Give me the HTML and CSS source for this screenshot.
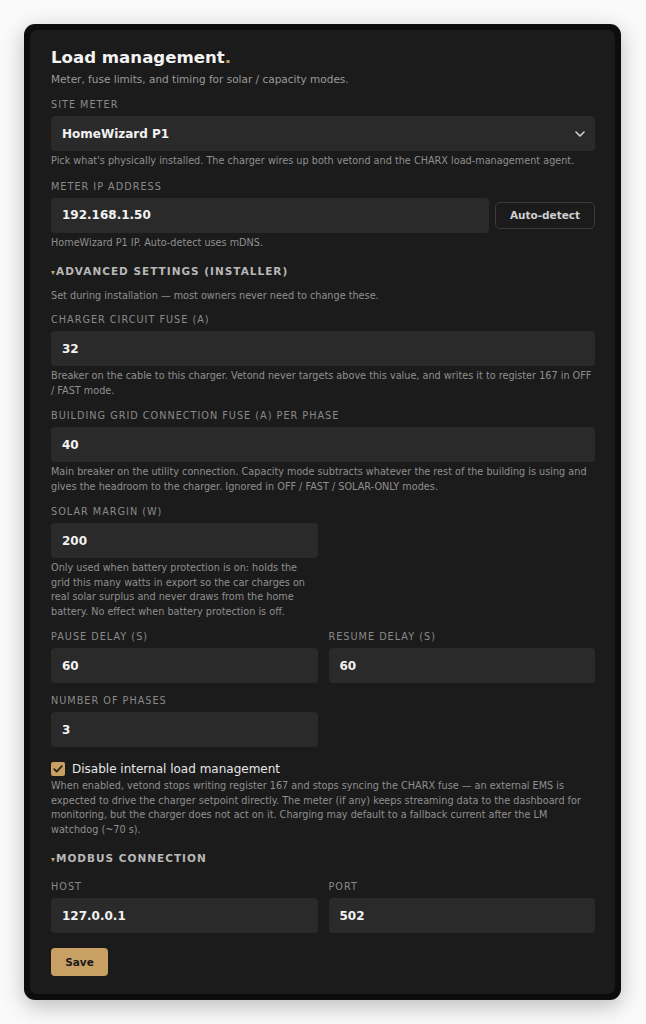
FILE: index.html
```html
<!DOCTYPE html>
<html lang="en">
<head>
<meta charset="utf-8">
<title>Load management</title>
<link rel="stylesheet" href="styles.css">
</head>
<body>
<div class="frame">
  <section class="card">
    <h1 class="title">Load management<span class="dot">.</span></h1>
    <p class="subtitle">Meter, fuse limits, and timing for solar / capacity modes.</p>

    <div class="field">
      <div class="label">Site meter</div>
      <div class="input select">
        <span>HomeWizard P1</span>
        <svg class="chev" width="10" height="6" viewBox="0 0 10 6"><path d="M1 1l4 4 4-4" fill="none" stroke="#d0d0d0" stroke-width="1.6" stroke-linecap="round" stroke-linejoin="round"/></svg>
      </div>
      <p class="hint">Pick what's physically installed. The charger wires up both vetond and the CHARX load-management agent.</p>
    </div>

    <div class="field">
      <div class="label">Meter IP address</div>
      <div class="row">
        <div class="input grow">192.168.1.50</div>
        <button class="btn-outline">Auto-detect</button>
      </div>
      <p class="hint">HomeWizard P1 IP. Auto-detect uses mDNS.</p>
    </div>

    <div class="toggle"><span class="tri"></span>Advanced settings (installer)</div>
    <p class="desc">Set during installation — most owners never need to change these.</p>

    <div class="field">
      <div class="label">Charger circuit fuse (A)</div>
      <div class="input">32</div>
      <p class="hint">Breaker on the cable to this charger. Vetond never targets above this value, and writes it to register 167 in OFF / FAST mode.</p>
    </div>

    <div class="field">
      <div class="label">Building grid connection fuse (A) per phase</div>
      <div class="input">40</div>
      <p class="hint">Main breaker on the utility connection. Capacity mode subtracts whatever the rest of the building is using and gives the headroom to the charger. Ignored in OFF / FAST / SOLAR-ONLY modes.</p>
    </div>

    <div class="grid2">
      <div class="field">
        <div class="label">Solar margin (W)</div>
        <div class="input">200</div>
        <p class="hint">Only used when battery protection is on: holds the grid this many watts in export so the car charges on real solar surplus and never draws from the home battery. No effect when battery protection is off.</p>
      </div>
    </div>

    <div class="grid2">
      <div class="field">
        <div class="label">Pause delay (s)</div>
        <div class="input">60</div>
      </div>
      <div class="field">
        <div class="label">Resume delay (s)</div>
        <div class="input">60</div>
      </div>
    </div>

    <div class="grid2">
      <div class="field">
        <div class="label">Number of phases</div>
        <div class="input">3</div>
      </div>
    </div>

    <label class="check">
      <span class="box"><svg width="10" height="8" viewBox="0 0 10 8"><path d="M1.2 4.2l2.5 2.4L8.8 1.2" fill="none" stroke="#2a2117" stroke-width="1.7" stroke-linecap="round" stroke-linejoin="round"/></svg></span>
      <span>Disable internal load management</span>
    </label>
    <p class="hint check-hint">When enabled, vetond stops writing register 167 and stops syncing the CHARX fuse — an external EMS is expected to drive the charger setpoint directly. The meter (if any) keeps streaming data to the dashboard for monitoring, but the charger does not act on it. Charging may default to a fallback current after the LM watchdog (~70 s).</p>

    <div class="toggle modbus"><span class="tri"></span>Modbus connection</div>

    <div class="grid2 hostrow">
      <div class="field">
        <div class="label">Host</div>
        <div class="input">127.0.0.1</div>
      </div>
      <div class="field">
        <div class="label">Port</div>
        <div class="input">502</div>
      </div>
    </div>

    <button class="btn-save">Save</button>
  </section>
</div>
</body>
</html>
```

FILE: styles.css
```css
* { box-sizing: border-box; }
html, body { margin: 0; padding: 0; }
body {
  background: #fafafa;
  font-family: "DejaVu Sans", "Liberation Sans", sans-serif;
  padding: 24px 25px 25px 24px;
}
.frame {
  background: #0c0c0c;
  border-radius: 11px;
  padding: 6px;
  box-shadow: 0 6px 22px rgba(0, 0, 0, 0.26);
}
.card {
  background: #1b1b1b;
  border-radius: 7px;
  padding: 18px 20px 18px 21px;
}
.title {
  margin: 0;
  font-size: 16.6px;
  line-height: 20px;
  font-weight: 700;
  color: #f3f3f3;
}
.dot { color: #c9a063; }
.subtitle {
  margin: 4px 0 0;
  font-size: 10.5px;
  line-height: 14px;
  color: #9a9a9a;
}
.field { margin-top: 11px; }
.subtitle + .field { margin-top: 12px; }
.label {
  font-size: 9.7px;
  line-height: 14px;
  letter-spacing: 1px;
  text-transform: uppercase;
  color: #8a8a8a;
  margin-bottom: 4px;
}
.input {
  height: 35px;
  background: #2a2a2a;
  border-radius: 4px;
  padding: 0 11px;
  display: flex;
  align-items: center;
  font-size: 12px;
  font-weight: 700;
  color: #f2f2f2;
}
.select { justify-content: space-between; padding-right: 10px; }
.chev { display: block; }
.row { display: flex; align-items: center; gap: 6px; }
.grow { flex: 1; }
.btn-outline {
  width: 100px;
  height: 27px;
  background: #1b1b1b;
  border: 1px solid #3a3a3a;
  border-radius: 5px;
  color: #cfcfcf;
  font-family: inherit;
  font-size: 10.5px;
  font-weight: 700;
  padding: 0;
}
.hint {
  margin: 3px 0 0;
  font-size: 9.7px;
  line-height: 14.5px;
  color: #8f8f8f;
}
.toggle {
  margin-top: 14px;
  display: flex;
  align-items: center;
  height: 15px;
  font-size: 10.5px;
  line-height: 15px;
  font-weight: 700;
  letter-spacing: 1px;
  text-transform: uppercase;
  color: #b8b8b8;
}
.tri {
  width: 0;
  height: 0;
  border-left: 2.5px solid transparent;
  border-right: 2.5px solid transparent;
  border-top: 4px solid #c9a063;
  margin: 2px 1px 0 0;
}
.desc {
  margin: 10px 0 0;
  font-size: 9.7px;
  line-height: 14px;
  color: #8f8f8f;
}
.desc + .field { margin-top: 10px; }
.grid2 {
  display: grid;
  grid-template-columns: 1fr 1fr;
  column-gap: 11px;
}
.check {
  margin-top: 14px;
  display: flex;
  align-items: center;
  gap: 7px;
  font-size: 12px;
  line-height: 16px;
  color: #e6e6e6;
}
.box {
  width: 14px;
  height: 14px;
  border-radius: 2px;
  background: #c9a063;
  display: flex;
  align-items: center;
  justify-content: center;
}
.check-hint { margin-top: 2px; }
.toggle.modbus { margin-top: 14px; }
.hostrow .field { margin-top: 14px; }
.btn-save {
  display: block;
  margin-top: 15px;
  width: 57px;
  height: 28px;
  background: #c9a063;
  border: 0;
  border-radius: 4px;
  color: #1a1a1a;
  font-family: inherit;
  font-size: 10.5px;
  font-weight: 700;
  padding: 0;
}
```
